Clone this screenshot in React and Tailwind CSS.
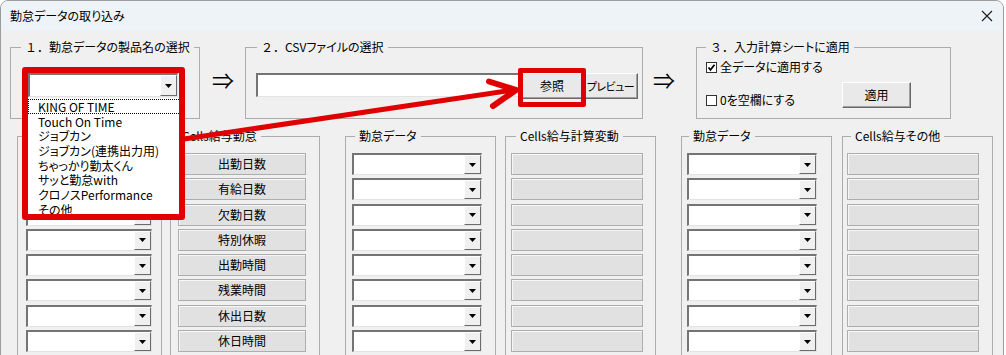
import React from "react";

const RED = "#e00000";

function Combo({ w, h = "h-[22px]" }) {
  return (
    <div className={`flex ${h} ${w} bg-white border-t-2 border-l-2 border-b border-r border-t-[#747474] border-l-[#747474] border-b-[#e3e3e3] border-r-[#e3e3e3]`}>
      <div className="flex-1" />
      <div className="w-[17px] flex items-center justify-center bg-[#f0f0f0] border border-t-white border-l-white border-b-[#6b6b6b] border-r-[#6b6b6b]">
        <svg width="7" height="4" viewBox="0 0 7 4"><path d="M0 0H7L3.5 4Z" fill="#000" /></svg>
      </div>
    </div>
  );
}

function Group({ label, className, legendClass, children }) {
  return (
    <fieldset className={`border border-[#acacac] min-w-0 ${className}`}>
      <legend className={`px-[4px] text-[12px] leading-[16px] whitespace-nowrap ${legendClass}`}>{label}</legend>
      {children}
    </fieldset>
  );
}

function CellBox({ w, children }) {
  return (
    <div className={`h-[22px] ${w} flex items-center justify-center bg-[#e1e1e1] border border-[#adadad] shadow-[inset_1px_1px_0_#f7f7f7] text-[12px] leading-[16px]`}>
      {children}
    </div>
  );
}

function Rows({ children }) {
  return <div className="flex flex-col gap-[3.3px]">{children}</div>;
}

function Num({ children }) {
  return <span className="[font-feature-settings:normal]">{children}</span>;
}

const btn3d =
  "flex items-center justify-center whitespace-nowrap bg-[#e9e9e9] border border-t-white border-l-white border-r-[#696969] border-b-[#696969] shadow-[inset_-1px_-1px_0_#a0a0a0] text-[12px] leading-[16px]";

const cellsKintai = ["出勤日数", "有給日数", "欠勤日数", "特別休暇", "出勤時間", "残業時間", "休出日数", "休日時間"];
const products = [
  "KING OF TIME",
  "Touch On Time",
  "ジョブカン",
  "ジョブカン(連携出力用)",
  "ちゃっかり勤太くん",
  "サッと勤怠with",
  "クロノスPerformance",
  "その他",
];
const eight = [0, 1, 2, 3, 4, 5, 6, 7];

export default function App() {
  return (
    <div className="relative w-[1006px] h-[355px] overflow-hidden bg-white text-black font-['Noto_Sans_CJK_JP',sans-serif] [font-feature-settings:'palt']">
      <div className="w-[1004px] h-[420px] border border-[#9c9c9c] rounded-t-[8px] bg-[#f0f0f0] overflow-hidden">
        {/* title bar */}
        <div className="h-[30px] bg-[#eef3f8] flex items-center justify-between pl-[9px] pr-[10px]">
          <span className="text-[12px] leading-[16px]">勤怠データの取り込み</span>
          <svg width="12" height="12" viewBox="0 0 12 12">
            <path d="M1 1L11 11M11 1L1 11" stroke="#1a1a1a" strokeWidth="1.1" />
          </svg>
        </div>

        {/* top row */}
        <div className="pt-[8px] pl-[9px] flex items-center">
          <Group label={<><Num>１．</Num>勤怠データの製品名の選択</>} className="w-[190px] h-[80px]" legendClass="ml-[10px]">
            <div className="pt-[18px] pl-[17px]">
              <Combo w="w-[150px]" h="h-[24px]" />
            </div>
          </Group>
          <div className="w-[45px] pl-[12px] text-[22px] leading-[22px]">⇒</div>
          <Group label={<><Num>２．</Num>CSVファイルの選択</>} className="w-[398px] h-[80px]" legendClass="ml-[11px]">
            <div className="pt-[18px] pl-[10px] flex items-start">
              <div className="w-[264px] h-[24px] bg-white border-t-2 border-l-2 border-b border-r border-t-[#747474] border-l-[#747474] border-b-[#e3e3e3] border-r-[#e3e3e3]" />
              <div className={`${btn3d} w-[62px] h-[26px] ml-[1px]`}>参照</div>
              <div className={`${btn3d} w-[55px] h-[26px] !text-[11px] tracking-[-0.6px]`}>プレビュー</div>
            </div>
          </Group>
          <div className="w-[53px] pl-[10px] text-[22px] leading-[22px]">⇒</div>
          <Group label={<><Num>３．</Num>入力計算シートに適用</>} className="w-[255px] h-[80px]" legendClass="ml-[9px]">
            <div className="pt-[4px] pl-[9px] flex items-start">
              <div className="w-[136px] flex flex-col gap-[17px]">
                <div className="flex items-center h-[16px]">
                  <div className="w-[11px] h-[11px] bg-white border border-[#333] flex items-center justify-center">
                    <svg width="9" height="9" viewBox="0 0 9 9"><path d="M1.5 4.5L3.5 6.8L7.5 1.8" stroke="#000" strokeWidth="1.8" fill="none" /></svg>
                  </div>
                  <span className="ml-[3px] text-[12px] leading-[16px]">全データに適用する</span>
                </div>
                <div className="flex items-center h-[16px]">
                  <div className="w-[11px] h-[11px] bg-white border border-[#333]" />
                  <span className="ml-[3px] text-[12px] leading-[16px]">0を空欄にする</span>
                </div>
              </div>
              <div className={`${btn3d} w-[69px] h-[26px] mt-[23px]`}>適用</div>
            </div>
          </Group>
        </div>

        {/* lower row */}
        <div className="mt-[9px] pl-[16px] flex">
          <Group label={<span className="inline-block w-[53px]">&nbsp;</span>} className="w-[145px] h-[260px]" legendClass="ml-[9px]">
            <div className="pt-[9px] pl-[8px]">
              <Rows>{eight.map((i) => <Combo key={i} w="w-[126px]" />)}</Rows>
            </div>
          </Group>
          <Group label="Cells給与勤怠" className="w-[150px] h-[260px] ml-[8px]" legendClass="ml-[7px]">
            <div className="pt-[9px] pl-[7px]">
              <Rows>{cellsKintai.map((t) => <CellBox key={t} w="w-[128px]">{t}</CellBox>)}</Rows>
            </div>
          </Group>
          <Group label="勤怠データ" className="w-[151px] h-[260px] ml-[25px]" legendClass="ml-[9px]">
            <div className="pt-[9px] pl-[6px]">
              <Rows>{eight.map((i) => <Combo key={i} w="w-[130px]" />)}</Rows>
            </div>
          </Group>
          <Group label="Cells給与計算変動" className="w-[151px] h-[260px] ml-[9px]" legendClass="ml-[10px]">
            <div className="pt-[9px] pl-[5px]">
              <Rows>{eight.map((i) => <CellBox key={i} w="w-[132px]" />)}</Rows>
            </div>
          </Group>
          <Group label="勤怠データ" className="w-[151px] h-[260px] ml-[25px]" legendClass="ml-[7px]">
            <div className="pt-[9px] pl-[5px]">
              <Rows>{eight.map((i) => <Combo key={i} w="w-[130px]" />)}</Rows>
            </div>
          </Group>
          <Group label="Cells給与その他" className="w-[151px] h-[260px] ml-[10px]" legendClass="ml-[8px]">
            <div className="pt-[9px] pl-[4px]">
              <Rows>{eight.map((i) => <CellBox key={i} w="w-[132px]" />)}</Rows>
            </div>
          </Group>
        </div>
      </div>

      {/* open dropdown list */}
      <div className="absolute left-[28px] top-[98px] w-[153px] h-[118px] bg-white pt-[1px]">
        {products.map((p, i) => (
          <div
            key={p}
            className={`h-[14.7px] pl-[9px] text-[12px] leading-[14px] whitespace-nowrap ${i === 0 ? "border border-dotted border-black" : "border border-transparent"}`}
          >
            {p}
          </div>
        ))}
      </div>

      {/* red annotation boxes */}
      <div className="absolute left-[22px] top-[67px] w-[163px] h-[153px] border-[6px] border-[#e00000] rounded-[3px]" />
      <div className="absolute left-[518px] top-[68px] w-[68px] h-[39px] border-[5px] border-[#e00000] rounded-[2px]" />

      {/* red arrow */}
      <svg className="absolute left-0 top-0 pointer-events-none" width="1006" height="355" viewBox="0 0 1006 355">
        <line x1="184" y1="139" x2="514" y2="90" stroke={RED} strokeWidth="5" />
        <polyline points="489,81.5 516,90 493,106" stroke={RED} strokeWidth="6" fill="none" strokeLinejoin="miter" strokeLinecap="round" />
      </svg>
    </div>
  );
}
